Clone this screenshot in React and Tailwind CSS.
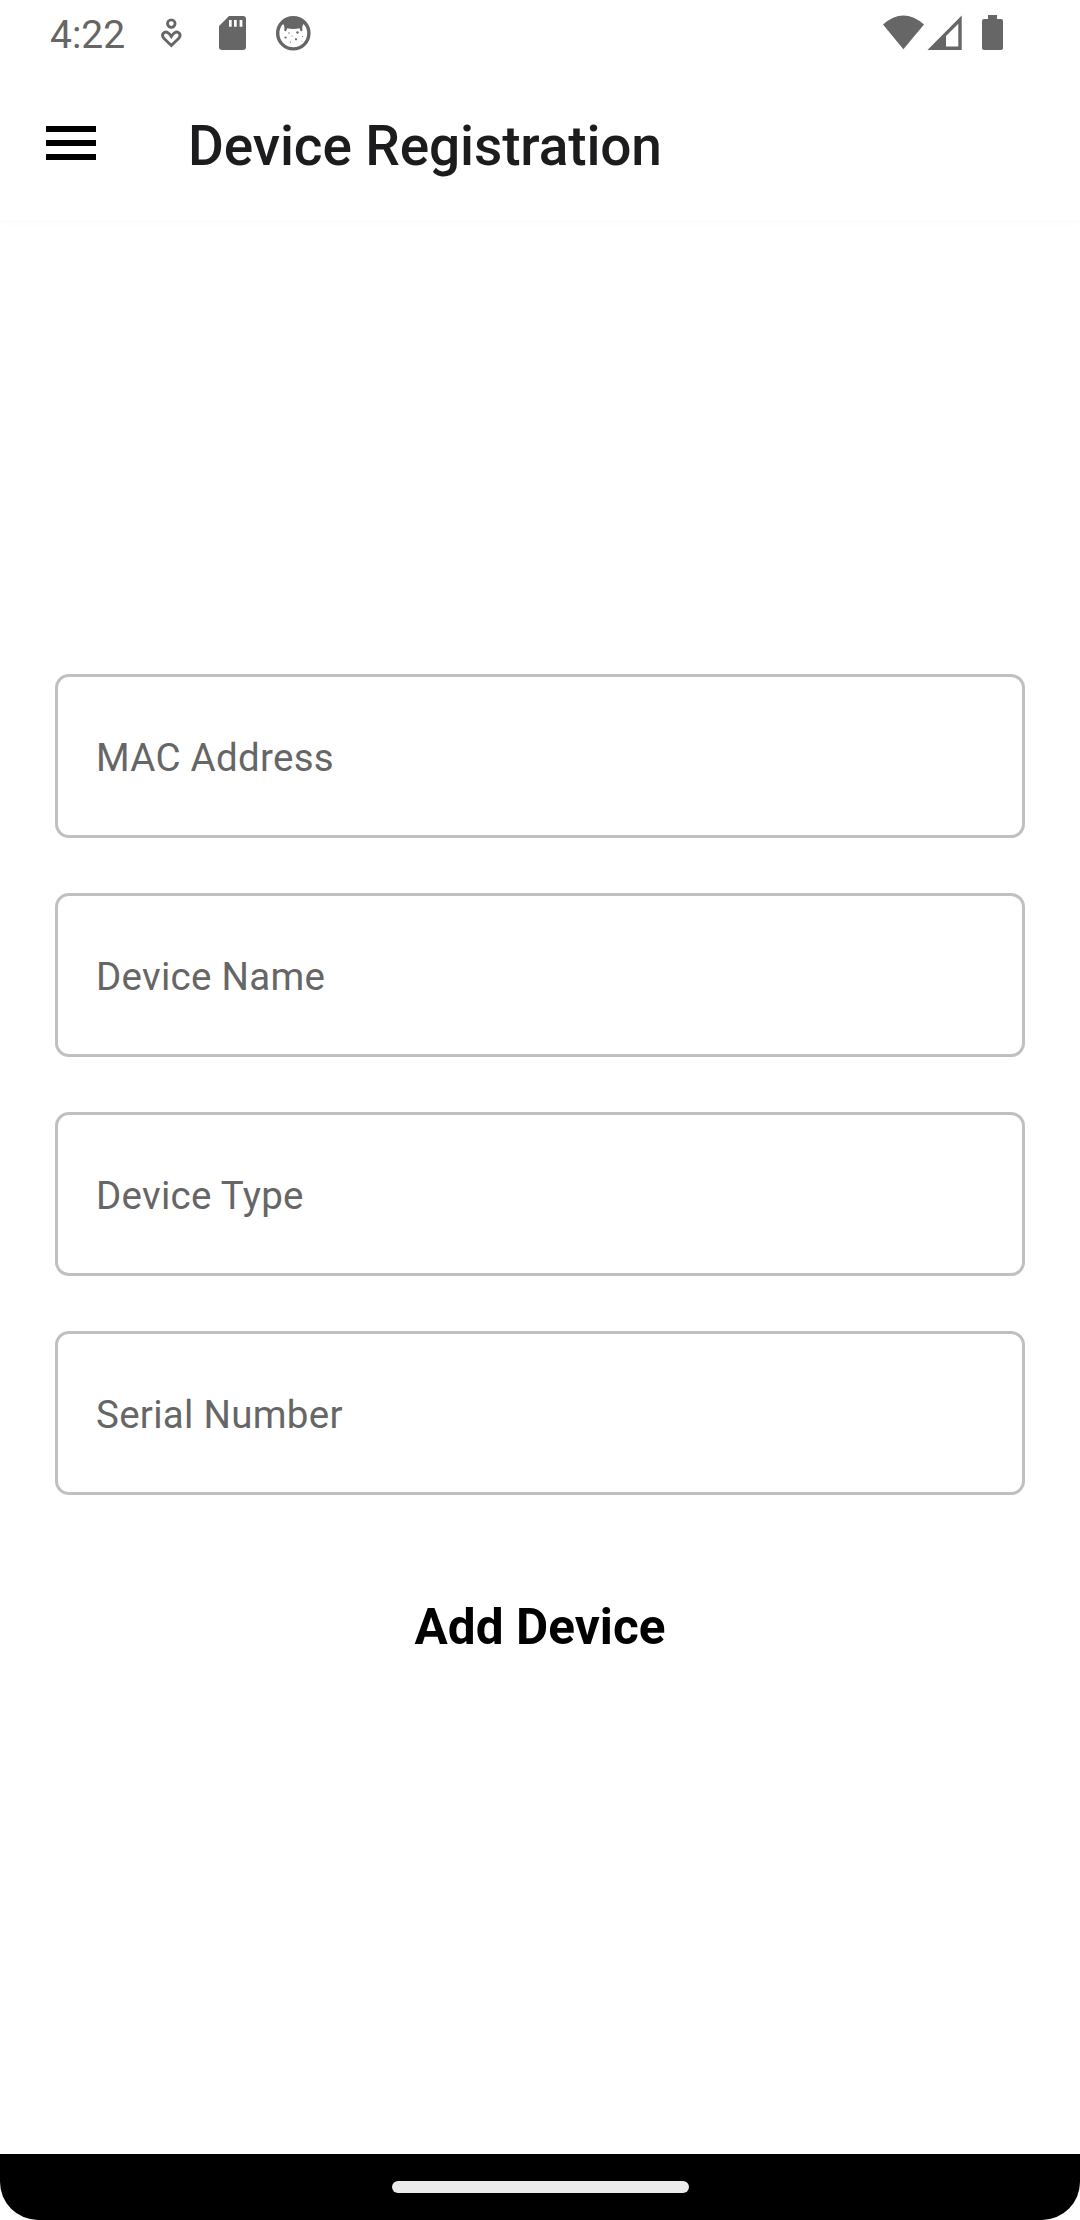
const fields = ["MAC Address", "Device Name", "Device Type", "Serial Number"];

function StatusBar() {
  return (
    <div className="flex h-[66px] w-full shrink-0 justify-between">
      <div className="flex">
        <span className="ml-[50px] mt-[12px] h-[46px] w-[94px] text-[39px] leading-[46px] text-[#666666]">4:22</span>
        <svg className="ml-[10px] mt-3" width="34" height="40" viewBox="154 12 34 40" fill="none" stroke="#666" strokeWidth="2.8">
          <circle cx="171.3" cy="23.6" r="3.8" />
          <path d="M171.3 45.5L163.8 38.2C160.5 34.5 164.5 30.6 168 32.7C169.8 33.7 170.5 35.3 171.3 36.6C172.1 35.3 172.8 33.7 174.6 32.7C178.1 30.6 182.1 34.5 178.8 38.2Z" />
        </svg>
        <svg className="ml-[31px] mt-[15px]" width="27" height="36" viewBox="219 15 27 36" fill="#666">
          <path fillRule="evenodd" d="M229 16H243Q246 16 246 19V47Q246 50 243 50H222Q219 50 219 47V26ZM229 20V26.7H231.7V20ZM234 20V26.7H236.7V20ZM239.6 20V26.7H242.4V20Z" />
        </svg>
        <svg className="ml-[29px] mt-[15px]" width="37" height="37" viewBox="275 15 37 37">
          <circle cx="293.3" cy="33.3" r="15.6" fill="none" stroke="#666" strokeWidth="3.4" />
          <path fill="#666" d="M282.5 23.5Q293.3 13 304.2 23.5Q301.5 25.5 302.5 30.5L300.8 31.5L299.5 28.3Q293.3 29.8 287.2 28.3L286 31.5L284.2 30.5Q285.2 25.5 282.5 23.5Z" />
          <g fill="#666">
            <circle cx="289" cy="33" r=".7" /><circle cx="297.5" cy="32.5" r="1.2" /><circle cx="285.5" cy="37.5" r="1.1" />
            <circle cx="296" cy="39.3" r="1.1" /><circle cx="302.5" cy="36.5" r=".6" /><circle cx="290.5" cy="42" r=".6" />
            <circle cx="292" cy="36" r=".5" /><circle cx="302" cy="41" r=".4" />
          </g>
        </svg>
      </div>
      <svg className="mr-[75px] mt-3" width="125" height="40" viewBox="880 12 125 40" fill="#666">
        <path d="M903.4 49.3L883 24.5Q903.4 6.5 924 24.5Z" />
        <path fillRule="evenodd" d="M927.5 50L961.7 15.5V50ZM946 36V46.6H958.3V23.7Z" />
        <path d="M988 15H997V19H1001Q1003 19 1003 21V48Q1003 50 1001 50H984Q982 50 982 48V21Q982 19 984 19H988Z" />
      </svg>
    </div>
  );
}

export default function App() {
  return (
    <div className="h-[2220px] w-[1080px] overflow-hidden bg-white">
      <div className="flex h-full flex-col bg-white font-[Roboto,sans-serif]">
        <header className="h-[220px] shrink-0 bg-white shadow-[0_2px_10px_rgba(0,0,0,0.025)]">
          <StatusBar />
          <div className="flex h-[154px]">
            <button aria-label="Open menu" className="ml-[46px] mt-[60px] flex h-[34px] w-[50px] flex-col justify-between">
              <span className="h-[6px] w-full bg-black" />
              <span className="h-[6px] w-full bg-black" />
              <span className="h-[6px] w-full bg-black" />
            </button>
            <h1 className="ml-[92px] mt-[48px] whitespace-nowrap text-[55px] font-medium leading-[64px] tracking-[-0.13px] text-[#1c1c1e]">Device Registration</h1>
          </div>
        </header>
        <main className="flex flex-1 flex-col px-[55px] pt-[454px]">
          <div className="flex flex-col gap-[55px]">
            {fields.map((label) => (
              <div key={label} className="flex h-[164px] items-center rounded-[14px] border-[3px] border-[#c0c0c0] bg-white pl-[38px] pt-[3px] text-[38.5px] tracking-[0.28px] text-[#666666]">
                {label}
              </div>
            ))}
          </div>
          <button className="mt-[102px] self-center text-[49.5px] font-bold leading-[60px] tracking-[0.05px] text-black">Add Device</button>
        </main>
        <footer className="flex h-[66px] shrink-0 justify-center bg-white">
          <div className="flex w-full justify-center rounded-b-[38px] bg-black">
            <div className="mt-[27px] h-[12px] w-[297px] rounded-full bg-[#ebebeb]" />
          </div>
        </footer>
      </div>
    </div>
  );
}
